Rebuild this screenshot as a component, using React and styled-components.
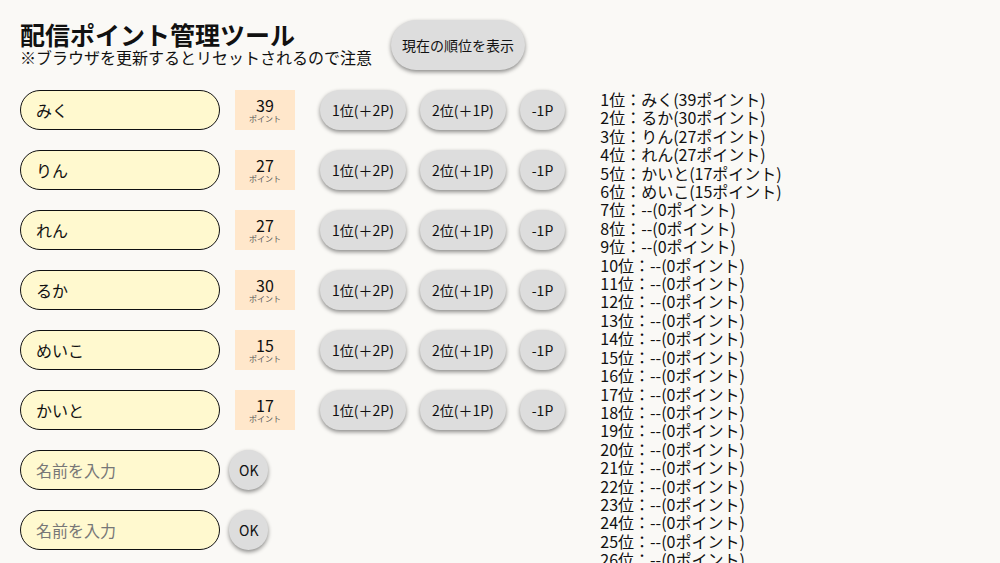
import React, {useState} from 'react';
import styled, {createGlobalStyle} from 'styled-components';

const GlobalStyle = createGlobalStyle`
  body {
    margin: 0;
    background: #faf9f6;
    color: #111;
    font-family: "Noto Sans CJK JP", "Noto Sans", sans-serif;
  }
`;

const Page = styled.div`
  padding: 20px;
`;

const Header = styled.div`
  display: flex;
  align-items: flex-start;
  margin-bottom: 20px;
`;

const TitleBlock = styled.div`
  display: flex;
  flex-direction: column;
`;

const Title = styled.h1`
  margin: 0;
  font-size: 25px;
  line-height: 28px;
  font-weight: 700;
`;

const Note = styled.div`
  font-size: 16px;
  line-height: 18px;
`;

const Button = styled.button`
  font-family: inherit;
  font-size: 14px;
  height: ${props => (props.big ? '50px' : '40px')};
  padding: 0 ${props => props.pad || 12}px;
  border: none;
  border-radius: 25px;
  background: #dddddd;
  color: #111;
  box-shadow: 0 2px 4px rgba(0, 0, 0, 0.45);
  cursor: pointer;
  white-space: nowrap;
  flex-shrink: 0;
`;

const ShowButton = styled(Button)`
  margin-left: 19px;
`;

const Body = styled.div`
  display: flex;
  align-items: flex-start;
  gap: 35px;
`;

const Rows = styled.div`
  display: flex;
  flex-direction: column;
  gap: 20px;
`;

const Row = styled.div`
  display: flex;
  align-items: center;
`;

const NameInput = styled.input`
  box-sizing: border-box;
  width: 200px;
  height: 40px;
  padding: 0 15px;
  border: 1px solid #111;
  border-radius: 20px;
  background: #fff9cf;
  font-family: inherit;
  font-size: 16px;
  color: #111;
  outline: none;

  &::placeholder {
    color: #777;
  }
`;

const PointBox = styled.div`
  width: 60px;
  height: 40px;
  margin: 0 25px 0 15px;
  background: #ffe7cb;
  display: flex;
  flex-direction: column;
  align-items: center;
  justify-content: center;
`;

const PointNum = styled.div`
  font-size: 16px;
  line-height: 17px;
`;

const PointUnit = styled.div`
  font-size: 8px;
  line-height: 9px;
  color: #555;
`;

const Actions = styled.div`
  display: flex;
  gap: 14px;
`;

const OkButton = styled(Button)`
  margin-left: 9px;
`;

const Ranking = styled.div`
  font-size: 16px;
  line-height: 18.4px;
`;

const RankLine = styled.div`
  white-space: nowrap;
`;

const initial = [
  {name: 'みく', points: 39},
  {name: 'りん', points: 27},
  {name: 'れん', points: 27},
  {name: 'るか', points: 30},
  {name: 'めいこ', points: 15},
  {name: 'かいと', points: 17}
];

export default function App() {
  const [players, setPlayers] = useState(initial);
  const [drafts, setDrafts] = useState(['', '']);

  const add = (i, delta) =>
    setPlayers(ps => ps.map((p, j) => (j === i ? {...p, points: p.points + delta} : p)));

  const confirm = i => {
    if (!drafts[i]) return;
    setPlayers(ps => [...ps, {name: drafts[i], points: 0}]);
    setDrafts(ds => ds.filter((_, j) => j !== i).concat(''));
  };

  const ranked = [...players].sort((a, b) => b.points - a.points);
  const list = Array.from({length: 30}, (_, i) => ranked[i] || {name: '--', points: 0});

  return (
    <Page>
      <GlobalStyle />
      <Header>
        <TitleBlock>
          <Title>配信ポイント管理ツール</Title>
          <Note>※ブラウザを更新するとリセットされるので注意</Note>
        </TitleBlock>
        <ShowButton big pad={11}>現在の順位を表示</ShowButton>
      </Header>
      <Body>
        <Rows>
          {players.map((p, i) => (
            <Row key={i}>
              <NameInput value={p.name} readOnly />
              <PointBox>
                <PointNum>{p.points}</PointNum>
                <PointUnit>ポイント</PointUnit>
              </PointBox>
              <Actions>
                <Button onClick={() => add(i, 2)}>1位(＋2P)</Button>
                <Button onClick={() => add(i, 1)}>2位(＋1P)</Button>
                <Button onClick={() => add(i, -1)}>-1P</Button>
              </Actions>
            </Row>
          ))}
          {drafts.map((d, i) => (
            <Row key={'d' + i}>
              <NameInput
                placeholder="名前を入力"
                value={d}
                onChange={e => setDrafts(ds => ds.map((x, j) => (j === i ? e.target.value : x)))}
              />
              <OkButton pad={10} onClick={() => confirm(i)}>OK</OkButton>
            </Row>
          ))}
        </Rows>
        <Ranking>
          {list.map((p, i) => (
            <RankLine key={i}>
              {i + 1}位：{p.name}({p.points}ポイント)
            </RankLine>
          ))}
        </Ranking>
      </Body>
    </Page>
  );
}
